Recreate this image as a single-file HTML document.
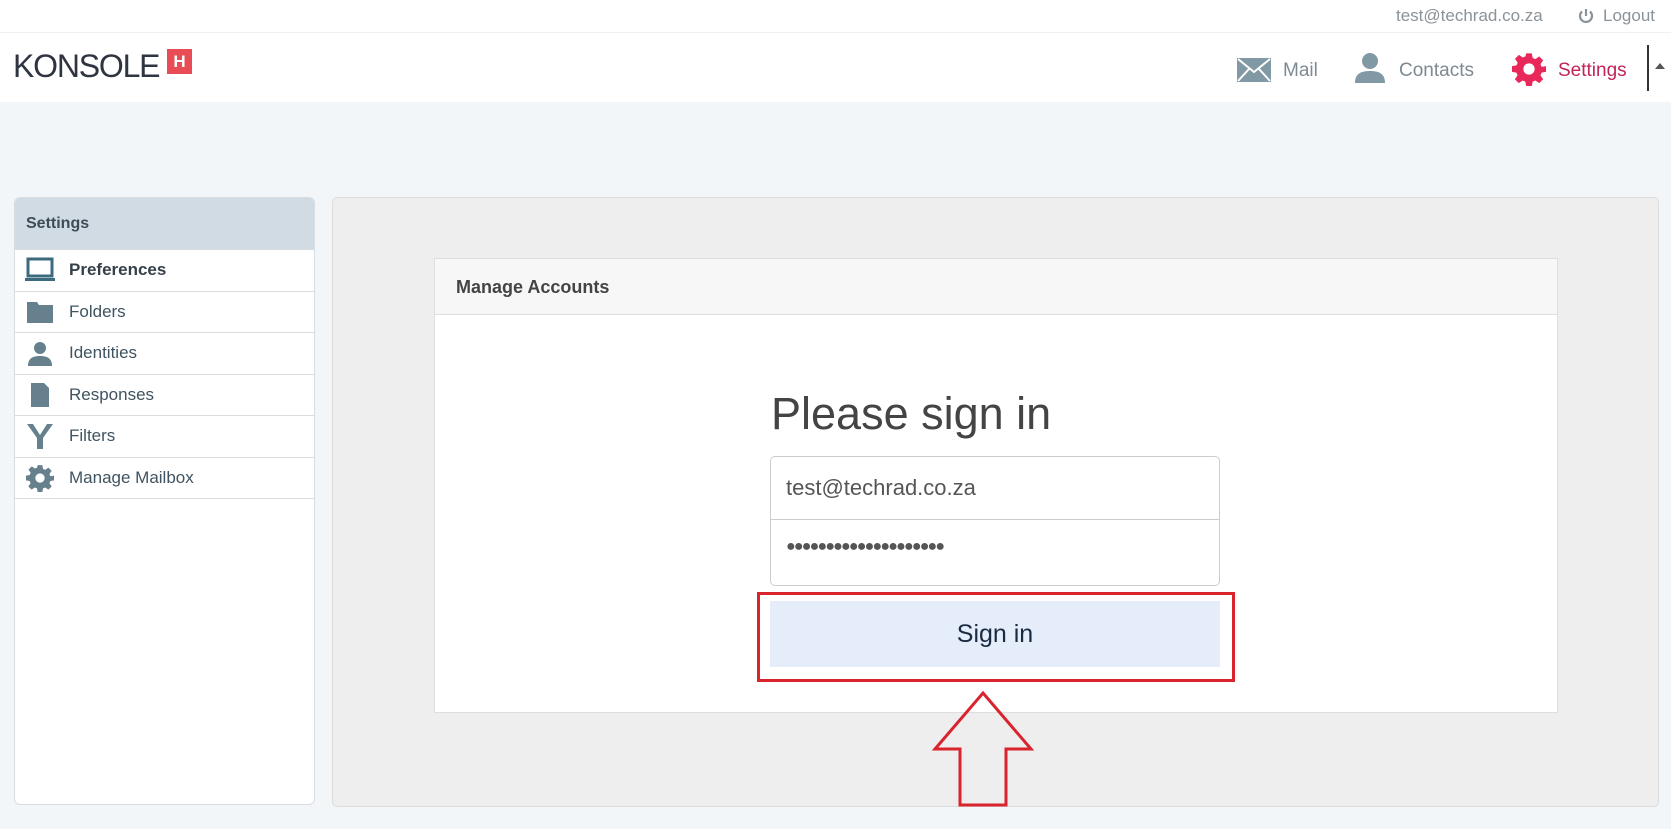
<!DOCTYPE html>
<html><head><meta charset="utf-8"><style>
*{box-sizing:border-box;margin:0;padding:0}
body{width:1671px;height:829px;background:#f3f6f9;font-family:"Liberation Sans",sans-serif;position:relative;overflow:hidden}
.abs{position:absolute}
.top{left:0;top:0;width:1671px;height:102px;background:#fff}
.topline{left:0;top:32px;width:1671px;height:1px;background:#eef1f4}
.side{left:14px;top:197px;width:301px;height:608px;background:#fff;border:1px solid #d6dde3;border-radius:6px;overflow:hidden}
.side .hd{height:51px;background:#d0dbe4;color:#3f4b57;font-weight:bold;font-size:16px;padding:17px 11px}
.side .it{height:41.5px;border-top:1px solid #d8dde2;display:flex;align-items:center;padding-left:10px;color:#3f5360;font-size:17px}
.side .it svg{width:30px;height:26px;margin-right:14px}
.panel{left:332px;top:197px;width:1327px;height:610px;background:#eeeeee;border:1px solid #dcdcdc;border-radius:5px}
.card{left:434px;top:258px;width:1124px;height:455px;background:#fff;border:1px solid #dedede}
.card .hd{height:56px;background:#f7f7f7;border-bottom:1px solid #dedede;padding:18px 21px;font-weight:bold;font-size:18px;color:#444}
</style></head><body>
<div class="abs top"></div>
<div class="abs topline"></div>
<div class="abs" style="left:1396px;top:6px;font-size:17px;color:#8a9399">test@techrad.co.za</div>
<svg class="abs" style="left:1577px;top:7px" width="18" height="18" viewBox="0 0 18 18"><path d="M5 4.5A6 6 0 1 0 13 4.5" fill="none" stroke="#8a9399" stroke-width="2.2"/><path d="M9 2v7" stroke="#8a9399" stroke-width="2.2"/></svg>
<div class="abs" style="left:1603px;top:6px;font-size:17px;color:#8a9399">Logout</div>
<div class="abs" style="left:13px;top:48px;font-size:32px;color:#2e3440;letter-spacing:-1.2px">KONSOLE</div>
<div class="abs" style="left:167px;top:49px;width:25px;height:25px;background:#e84c55;color:#fff;font-weight:bold;font-size:17px;text-align:center;line-height:25px">H</div>
<svg class="abs" style="left:1237px;top:58px" width="34" height="24" viewBox="0 0 34 24"><rect x="0" y="0" width="34" height="24" fill="#8199a5"/><path d="M1 1L17 14L33 1M1 23L12 11M33 23L22 11" stroke="#fff" stroke-width="2" fill="none"/></svg>
<div class="abs" style="left:1283px;top:60px;font-size:19px;color:#7d8a92">Mail</div>
<svg class="abs" style="left:1354px;top:51px" width="32" height="32" viewBox="0 0 32 32"><circle cx="16" cy="10" r="8" fill="#8199a5"/><path d="M1 32C1 22 8 20 16 20C24 20 31 22 31 32Z" fill="#8199a5"/></svg>
<div class="abs" style="left:1399px;top:60px;font-size:19px;color:#7d8a92">Contacts</div>
<svg class="abs" style="left:1512px;top:52px" width="34" height="34" viewBox="0 0 24 24"><path fill="#e8285a" d="M10 1h4l.6 3.2 1.9.8 2.7-1.9 2.8 2.8-1.9 2.7.8 1.9L24 10v4l-3.1.6-.8 1.9 1.9 2.7-2.8 2.8-2.7-1.9-1.9.8L14 24h-4l-.6-3.1-1.9-.8-2.7 1.9-2.8-2.8 1.9-2.7-.8-1.9L0 14v-4l3.2-.6.8-1.9-1.9-2.7 2.8-2.8 2.7 1.9 1.9-.8z"/><circle cx="12" cy="12" r="4" fill="#fff"/></svg>
<div class="abs" style="left:1558px;top:60px;font-size:19px;color:#c0245a">Settings</div>
<div class="abs" style="left:1647px;top:45px;width:2px;height:46px;background:#333"></div>
<div class="abs" style="left:1655px;top:63px;width:0;height:0;border-left:5px solid transparent;border-right:5px solid transparent;border-bottom:6px solid #555"></div>

<div class="abs side">
<div class="hd">Settings</div>
<div class="it" style="font-weight:bold;color:#36404a"><svg viewBox="0 0 30 26"><rect x="3" y="2" width="24" height="17" fill="none" stroke="#3c6a7d" stroke-width="3"/><path d="M0 21h30v3H0z" fill="#3c6a7d"/></svg>Preferences</div>
<div class="it"><svg viewBox="0 0 30 26"><path d="M2 3h10l2 3h14v18H2z" fill="#66818d"/></svg>Folders</div>
<div class="it"><svg viewBox="0 0 30 26"><circle cx="15" cy="8" r="6" fill="#66818d"/><path d="M3 26C3 18 8 16 15 16C22 16 27 18 27 26Z" fill="#66818d"/></svg>Identities</div>
<div class="it"><svg viewBox="0 0 30 26"><path d="M6 1h13l5 5v19H6z" fill="#66818d"/></svg>Responses</div>
<div class="it"><svg viewBox="0 0 30 26"><path d="M2 1h6l7 11 7-11h6l-10 14v11h-6V15z" fill="#66818d"/></svg>Filters</div>
<div class="it"><svg viewBox="0 0 24 24" style="width:28px;height:28px;margin-left:1px;margin-right:15px"><path fill="#66818d" d="M10 1h4l.6 3.2 1.9.8 2.7-1.9 2.8 2.8-1.9 2.7.8 1.9L24 10v4l-3.1.6-.8 1.9 1.9 2.7-2.8 2.8-2.7-1.9-1.9.8L14 24h-4l-.6-3.1-1.9-.8-2.7 1.9-2.8-2.8 1.9-2.7-.8-1.9L0 14v-4l3.2-.6.8-1.9-1.9-2.7 2.8-2.8 2.7 1.9 1.9-.8z"/><circle cx="12" cy="12" r="4" fill="#fff"/></svg>Manage Mailbox</div>
<div style="border-top:1px solid #d8dde2"></div>
</div>

<div class="abs panel"></div>
<div class="abs card"><div class="hd">Manage Accounts</div></div>
<div class="abs" style="left:771px;top:388px;font-size:45px;color:#444">Please sign in</div>
<div class="abs" style="left:770px;top:456px;width:450px;height:130px;border:1px solid #cccccc;border-radius:5px"></div>
<div class="abs" style="left:771px;top:519px;width:448px;height:1px;background:#ccc"></div>
<div class="abs" style="left:786px;top:475px;font-size:22px;color:#555">test@techrad.co.za</div>
<div class="abs" style="left:786px;top:538px;font-size:16px;color:#555;letter-spacing:-1.8px">●●●●●●●●●●●●●●●●●●●●</div>
<div class="abs" style="left:757px;top:592px;width:478px;height:90px;border:3px solid #d9232d"></div>
<div class="abs" style="left:770px;top:601px;width:450px;height:66px;background:#e4edf9;color:#1a2a40;font-size:25px;text-align:center;line-height:66px">Sign in</div>
<svg class="abs" style="left:930px;top:688px" width="106" height="120" viewBox="930 688 106 120"><path d="M983 693L1031 749H1006V805H960V749H935Z" fill="none" stroke="#d9232d" stroke-width="3"/></svg>
</body></html>
